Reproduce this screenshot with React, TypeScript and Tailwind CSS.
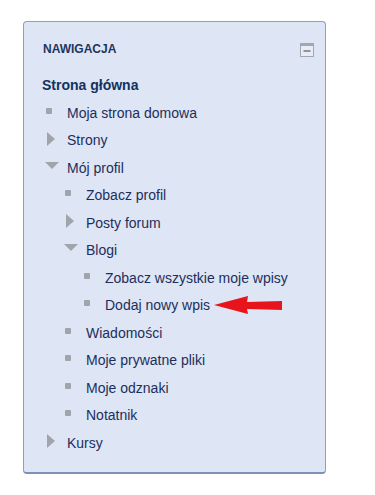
import React from "react";

type Kind = "leaf" | "closed" | "open";
const items: { t: string; l: number; k: Kind; arrow?: boolean }[] = [
  { t: "Moja strona domowa", l: 0, k: "leaf" },
  { t: "Strony", l: 0, k: "closed" },
  { t: "Mój profil", l: 0, k: "open" },
  { t: "Zobacz profil", l: 1, k: "leaf" },
  { t: "Posty forum", l: 1, k: "closed" },
  { t: "Blogi", l: 1, k: "open" },
  { t: "Zobacz wszystkie moje wpisy", l: 2, k: "leaf" },
  { t: "Dodaj nowy wpis", l: 2, k: "leaf", arrow: true },
  { t: "Wiadomości", l: 1, k: "leaf" },
  { t: "Moje prywatne pliki", l: 1, k: "leaf" },
  { t: "Moje odznaki", l: 1, k: "leaf" },
  { t: "Notatnik", l: 1, k: "leaf" },
  { t: "Kursy", l: 0, k: "closed" },
];

function Icon({ k }: { k: Kind }) {
  if (k === "leaf")
    return (
      <span className="w-[22px] flex items-start h-[27.5px] pt-[8px] pl-[1px]">
        <span className="block w-[6px] h-[6px] bg-[#a0a4ab] rounded-[1px]" />
      </span>
    );
  if (k === "closed")
    return (
      <span className="w-[22px] flex items-center h-[27.5px] pl-[2px] pb-[4px]">
        <svg width="8" height="14" viewBox="0 0 8 14">
          <path d="M0 0 L8 7 L0 14 Z" fill="#a0a4ab" />
        </svg>
      </span>
    );
  return (
    <span className="w-[22px] flex items-center h-[27.5px] pb-[6px]">
      <svg width="14" height="7" viewBox="0 0 14 7">
        <path d="M0 0 L14 0 L7 7 Z" fill="#a0a4ab" />
      </svg>
    </span>
  );
}

export default function App() {
  return (
    <div className="w-[375px] h-[495px] bg-white pl-[23px] pt-[21px]" style={{ fontFamily: '"Liberation Sans", Arial, sans-serif' }}>
      <div className="w-[303px] h-[453px] bg-[#dee5f4] border border-[#8d9fc6] border-b-2 border-b-[#7f90b8] rounded-[4px] pt-[19px] pl-[19px] pr-[11px]">
        <div className="flex items-center justify-between h-4">
          <span className="text-[12px] font-bold text-[#1d3660]">NAWIGACJA</span>
          <svg width="14" height="14" viewBox="0 0 14 14" className="mt-[1px]">
            <rect x="0.5" y="0.5" width="13" height="13" fill="#e8edf5" stroke="#a3a8b0" />
            <rect x="1" y="1" width="12" height="2" fill="#a3a8b0" />
            <rect x="3.5" y="7" width="7" height="2" fill="#8f949c" />
          </svg>
        </div>
        <div className="mt-[15px]">
          <div className="h-[27.5px] leading-[27.5px] text-[14px] font-bold text-[#13325f] -ml-[1px]">Strona główna</div>
          {items.map((it, i) => (
            <div key={i} className="flex items-start h-[27.5px]" style={{ paddingLeft: 2 + it.l * 19 }}>
              <Icon k={it.k} />
              <span className="leading-[27.5px] text-[14px] text-[#1c2f5c] whitespace-nowrap">{it.t}</span>
              {it.arrow && (
                <svg width="70" height="20" viewBox="0 0 70 20" className="ml-[4px] mt-[3px]">
                  <path d="M0 10 L34 1 L33 7 L68 6 L68 15 L33 14 L34 19 Z" fill="#e8141c" />
                </svg>
              )}
            </div>
          ))}
        </div>
      </div>
    </div>
  );
}
